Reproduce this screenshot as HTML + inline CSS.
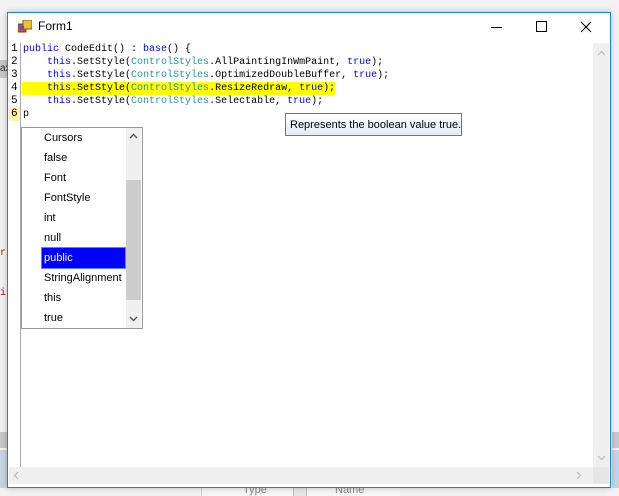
<!DOCTYPE html>
<html><head><style>
body{margin:0;width:619px;height:496px;overflow:hidden;background:#f3f3f3;position:relative;font-family:"Liberation Sans",sans-serif}
.a{position:absolute}
.code{font-family:"Liberation Mono",monospace;font-size:10px;line-height:13px;white-space:pre;color:#000}
.k{color:#0000ff}.t{color:#2b91af}
.ln{font-family:"Liberation Mono",monospace;font-size:11px;line-height:13px;color:#000}
.it{position:absolute;left:44px;font-size:11px;color:#000;height:20px;line-height:20px}
</style></head><body>
<div class="a" style="left:0;top:60px;width:8px;height:18px;background:#c8c8c8;font-size:10px;line-height:18px;color:#333">ax</div>
<div class="a code" style="left:0;top:247px;color:#a31515">ri</div>
<div class="a code" style="left:0;top:287px;color:#a31515">ir</div>
<div class="a" style="left:0;top:432px;width:8px;height:16px;background:#c8c8c8"></div>
<div class="a" style="left:0;top:450px;width:8px;height:38px;background:#c9d4e2"></div>
<div class="a" style="left:612px;top:432px;width:7px;height:16px;background:#c8c8c8"></div>
<div class="a" style="left:612px;top:450px;width:7px;height:38px;background:#c9d4e2"></div>
<div class="a" style="left:200px;top:487px;width:200px;height:9px;background:#f7f7f7"></div>
<div class="a" style="left:201px;top:487px;width:57px;height:9px;border-left:1px solid #ccc"></div>
<div class="a" style="left:243px;top:484px;font-size:11px;color:#888">Type</div>
<div class="a" style="left:293px;top:486px;width:12px;height:10px;background:#e8e8e8;border-left:1px solid #bbb;border-right:1px solid #bbb"></div>
<div class="a" style="left:335px;top:484px;font-size:11px;color:#888">Name</div>
<!-- window -->
<div class="a" style="left:7px;top:12px;width:602px;height:474px;border:1px solid #1883d7;background:#fff;box-shadow:0 0 6px rgba(0,0,0,.25)"></div>
<svg class="a" style="left:18px;top:20px" width="14" height="14"><rect x="0" y="4" width="8" height="8" fill="#e04040" stroke="#804020" stroke-width="1"/><rect x="5" y="0" width="9" height="9" fill="#f0c030" stroke="#806000"/><rect x="2" y="6" width="4" height="4" fill="#4060d0"/></svg>
<div class="a" style="left:38px;top:19px;font-size:12px;color:#000">Form1</div>
<div class="a" style="left:491px;top:27px;width:11px;height:1px;background:#000"></div>
<div class="a" style="left:536px;top:21px;width:9px;height:9px;border:1px solid #000"></div>
<svg class="a" style="left:580px;top:21px" width="12" height="12"><path d="M1 1L11 11M11 1L1 11" stroke="#000" stroke-width="1.1"/></svg>
<!-- gutter -->
<div class="a" style="left:20px;top:43px;width:1px;height:424px;background:#aaa"></div>
<div class="a" style="left:9px;top:108px;width:11px;height:13px;background:#fff4b0"></div>
<div class="a ln" style="left:11px;top:43px">1<br>2<br>3<br>4<br>5<br>6</div>
<div class="a" style="left:22px;top:82px;width:313px;height:13px;background:#ffff00"></div>
<div class="a code" style="left:23px;top:43px"><span class="k">public</span> CodeEdit() : <span class="k">base</span>() {
    <span class="k">this</span>.SetStyle(<span class="t">ControlStyles</span>.AllPaintingInWmPaint, <span class="k">true</span>);
    <span class="k">this</span>.SetStyle(<span class="t">ControlStyles</span>.OptimizedDoubleBuffer, <span class="k">true</span>);
    <span class="k">this</span>.SetStyle(<span class="t">ControlStyles</span>.ResizeRedraw, <span class="k">true</span>);
    <span class="k">this</span>.SetStyle(<span class="t">ControlStyles</span>.Selectable, <span class="k">true</span>);
p</div>
<!-- tooltip -->
<div class="a" style="left:285px;top:113px;width:175px;height:21px;border:1px solid #767676;background:linear-gradient(#fff,#e4ecf7);font-size:11px;line-height:22px;text-indent:4px;color:#000;white-space:nowrap">Represents the boolean value true.</div>
<!-- scrollbars -->
<div class="a" style="left:593px;top:43px;width:16px;height:424px;background:#f0f0f0"></div>
<svg class="a" style="left:597px;top:50px" width="9" height="6"><path d="M1 5L4.5 1.5L8 5" stroke="#c0c0c0" stroke-width="1.3" fill="none"/></svg>
<svg class="a" style="left:597px;top:455px" width="9" height="6"><path d="M1 1L4.5 4.5L8 1" stroke="#c0c0c0" stroke-width="1.3" fill="none"/></svg>
<div class="a" style="left:9px;top:467px;width:584px;height:17px;background:#f0f0f0"></div>
<div class="a" style="left:593px;top:467px;width:16px;height:17px;background:#e6e6e6"></div>
<svg class="a" style="left:13px;top:471px" width="6" height="9"><path d="M5 1L1.5 4.5L5 8" stroke="#c0c0c0" stroke-width="1.3" fill="none"/></svg>
<svg class="a" style="left:490px;top:471px;left:490px" width="6" height="9"></svg>
<svg class="a" style="left:576px;top:471px" width="6" height="9"><path d="M1 1L4.5 4.5L1 8" stroke="#c0c0c0" stroke-width="1.3" fill="none"/></svg>
<!-- completion list -->
<div class="a" style="left:21px;top:127px;width:120px;height:200px;border:1px solid #999;background:#fff"></div>
<div class="a" style="left:126px;top:128px;width:15px;height:200px;background:#f0f0f0"></div>
<div class="a" style="left:126px;top:180px;width:15px;height:120px;background:#cdcdcd"></div>
<svg class="a" style="left:129px;top:133px" width="9" height="6"><path d="M1 5L4.5 1.5L8 5" stroke="#555" stroke-width="1.4" fill="none"/></svg>
<svg class="a" style="left:129px;top:316px" width="9" height="6"><path d="M1 1L4.5 4.5L8 1" stroke="#555" stroke-width="1.4" fill="none"/></svg>
<div class="a" style="left:42px;top:248px;width:83px;height:20px;background:#0000ff;outline:1px solid #6080ff"></div>
<div class="it" style="top:128px">Cursors</div>
<div class="it" style="top:148px">false</div>
<div class="it" style="top:168px">Font</div>
<div class="it" style="top:188px">FontStyle</div>
<div class="it" style="top:208px">int</div>
<div class="it" style="top:228px">null</div>
<div class="it" style="top:248px;color:#fff">public</div>
<div class="it" style="top:268px">StringAlignment</div>
<div class="it" style="top:288px">this</div>
<div class="it" style="top:308px">true</div>
</body></html>
